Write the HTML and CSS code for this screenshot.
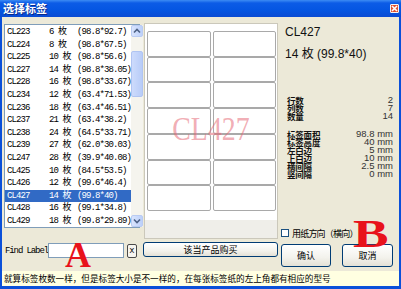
FILE: index.html
```html
<!DOCTYPE html>
<html>
<head>
<meta charset="utf-8">
<title>选择标签</title>
<link rel="stylesheet" href="styles.css">
</head>
<body>
<div class="window">
  <div class="titlebar">
    <span class="title">选择标签</span>
    <span class="close">
      <svg width="7" height="7" viewBox="0 0 7 7"><path d="M1 1L6 6M6 1L1 6" stroke="#fff" stroke-width="1.6"/></svg>
    </span>
  </div>
  <div class="frame">
    <div class="main">
      <div class="col left">
        <div class="list">
          <div class="rows">
            <div class="row"><span class="code">CL223</span><span class="count">6 枚</span><span>(98.8*92.7)</span></div>
            <div class="row"><span class="code">CL224</span><span class="count">8 枚</span><span>(98.8*67.5)</span></div>
            <div class="row"><span class="code">CL225</span><span class="count">10 枚</span><span>(98.8*56.6)</span></div>
            <div class="row"><span class="code">CL227</span><span class="count">14 枚</span><span>(98.8*38.05)</span></div>
            <div class="row"><span class="code">CL228</span><span class="count">16 枚</span><span>(98.8*33.67)</span></div>
            <div class="row"><span class="code">CL234</span><span class="count">12 枚</span><span>(63.4*71.53)</span></div>
            <div class="row"><span class="code">CL236</span><span class="count">18 枚</span><span>(63.4*46.51)</span></div>
            <div class="row"><span class="code">CL237</span><span class="count">21 枚</span><span>(63.4*38.2)</span></div>
            <div class="row"><span class="code">CL238</span><span class="count">24 枚</span><span>(64.5*33.71)</span></div>
            <div class="row"><span class="code">CL239</span><span class="count">27 枚</span><span>(62.0*30.03)</span></div>
            <div class="row"><span class="code">CL247</span><span class="count">28 枚</span><span>(39.9*40.08)</span></div>
            <div class="row"><span class="code">CL425</span><span class="count">10 枚</span><span>(84.5*53.5)</span></div>
            <div class="row"><span class="code">CL426</span><span class="count">12 枚</span><span>(99.6*46.4)</span></div>
            <div class="row selected"><span class="code">CL427</span><span class="count">14 枚</span><span>(99.8*40)</span></div>
            <div class="row"><span class="code">CL428</span><span class="count">16 枚</span><span>(99.1*34.8)</span></div>
            <div class="row"><span class="code">CL429</span><span class="count">18 枚</span><span>(99.8*29.89)</span></div>
          </div>
          <div class="scrollbar">
            <div class="sb-btn">
              <svg width="10" height="10" viewBox="0 0 10 10"><path d="M2 6.5L5 3.5L8 6.5" fill="none" stroke="#4d6185" stroke-width="1.6"/></svg>
            </div>
            <div class="track"><div class="thumb"></div></div>
            <div class="sb-btn">
              <svg width="10" height="10" viewBox="0 0 10 10"><path d="M2 3.5L5 6.5L8 3.5" fill="none" stroke="#4d6185" stroke-width="1.6"/></svg>
            </div>
          </div>
        </div>
        <div class="find">
          <span class="find-label">Find Label</span>
          <span class="find-input"></span>
          <span class="find-clear">X</span>
        </div>
      </div>

      <div class="col center">
        <div class="preview">
          <div class="sheet">
            <div class="labels">
              <div class="lbl"></div><div class="lbl"></div>
              <div class="lbl"></div><div class="lbl"></div>
              <div class="lbl"></div><div class="lbl"></div>
              <div class="lbl"></div><div class="lbl"></div>
              <div class="lbl"></div><div class="lbl"></div>
              <div class="lbl"></div><div class="lbl"></div>
              <div class="lbl"></div><div class="lbl"></div>
            </div>
          </div>
          <div class="watermark">CL427</div>
        </div>
        <div class="btn wide">该当产品购买</div>
      </div>

      <div class="col right">
        <div class="code-title">CL427</div>
        <div class="sub-title">14 枚 (99.8*40)</div>
        <div class="stats">
          <span class="k">行数</span><span class="v">2</span>
          <span class="k">列数</span><span class="v">7</span>
          <span class="k">数量</span><span class="v">14</span>
        </div>
        <div class="stats">
          <span class="k">标签面积</span><span class="v">98.8 mm</span>
          <span class="k">标签高度</span><span class="v">40 mm</span>
          <span class="k">左白边</span><span class="v">5 mm</span>
          <span class="k">上白边</span><span class="v">10 mm</span>
          <span class="k">横间隔</span><span class="v">2.5 mm</span>
          <span class="k">竖间隔</span><span class="v">0 mm</span>
        </div>
        <div class="orient"><span class="box"></span>用纸方向（横向）</div>
        <div class="actions">
          <div class="btn ok">确认</div>
          <div class="btn cancel">取消</div>
        </div>
      </div>
    </div>
    <div class="hint">就算标签枚数一样，但是标签大小是不一样的，在每张标签纸的左上角都有相应的型号</div>
  </div>
  <div class="mark mark-a">A</div>
  <div class="mark mark-b">B</div>
</div>
</body>
</html>
```

FILE: styles.css
```css
body {
    margin: 0;
    padding: 0;
    background: #fff;
}

.window {
    width: 401px;
    height: 289px;
    background: #0b50d9;
    display: flex;
    flex-direction: column;
    position: relative;
    overflow: hidden;
    font-family: "Noto Sans CJK SC", sans-serif;
}

/* title bar */

.titlebar {
    height: 17px;
    flex: none;
    display: flex;
    align-items: center;
    justify-content: space-between;
    padding: 0 2px 0 3px;
    background: linear-gradient(#3d8cf4 0, #0c5ce6 3px, #0556e2 10px, #0a4bd3 17px);
}

.title {
    color: #fff;
    font-size: 11px;
    font-weight: bold;
    line-height: 17px;
    text-shadow: 1px 1px 0 #0a2a8a;
}

.close {
    width: 9px;
    height: 9px;
    box-sizing: border-box;
    border: 1px solid #f4f4f4;
    border-radius: 1px;
    background: #e0512e;
    display: flex;
    align-items: center;
    justify-content: center;
}

.close svg {
    display: block;
}

.frame {
    flex: 1;
    margin: 0 2px 3px;
    background: #ece9d8;
    display: flex;
    flex-direction: column;
}

.main {
    height: 254px;
    display: flex;
    padding-left: 2px;
}

.col {
    display: flex;
    flex-direction: column;
}

.left {
    width: 136px;
}

.center {
    width: 134px;
    margin-left: 4px;
}

.right {
    width: 118px;
    margin-left: 3px;
    box-sizing: border-box;
    padding: 0 6px 0 4px;
}

/* list */

.list {
    margin-top: 7px;
    height: 204px;
    box-sizing: border-box;
    border: 1px solid #7f9db9;
    background: #fff;
    display: flex;
}

.rows {
    flex: 1;
    padding-top: 1px;
}

.row {
    height: 12.6px;
    line-height: 12.6px;
    padding-left: 2px;
    display: flex;
    font-family: "Liberation Mono", "Noto Sans CJK SC", monospace;
    font-size: 9px;
    letter-spacing: -0.9px;
    color: #000;
    white-space: nowrap;
}

.row .code {
    width: 42px;
}

.row .count {
    width: 28px;
}

.row.selected {
    background: #316ac5;
    color: #fff;
}

.scrollbar {
    width: 12px;
    display: flex;
    flex-direction: column;
    background: #f5f4ee;
}

.sb-btn {
    height: 12px;
    box-sizing: border-box;
    border: 1px solid #b9cbf3;
    border-radius: 2px;
    background: linear-gradient(90deg, #d9e4fd, #bcd0fa);
    display: flex;
    align-items: center;
    justify-content: center;
}

.track {
    flex: 1;
    padding-top: 14px;
}

.thumb {
    height: 46px;
    box-sizing: border-box;
    border: 1px solid #b0c4f2;
    border-radius: 2px;
    background: linear-gradient(90deg, #cddbfc, #b8ccf8);
}

.find {
    margin-top: 15px;
    height: 15px;
    display: flex;
    align-items: center;
}

.find-label {
    width: 43px;
    padding-left: 1px;
    font-family: "Liberation Mono", monospace;
    font-size: 9px;
    letter-spacing: -1.1px;
    white-space: nowrap;
}

.find-input {
    width: 76px;
    height: 15px;
    box-sizing: border-box;
    border: 1px solid #7f9db9;
    background: #fff;
}

.find-clear {
    margin-left: 3px;
    width: 10px;
    height: 14px;
    box-sizing: border-box;
    border: 1px solid #4a4a4a;
    border-radius: 2px;
    background: #f6f5f0;
    font-family: "Liberation Mono", monospace;
    font-size: 8px;
    line-height: 12px;
    text-align: center;
}

/* preview */

.preview {
    margin-top: 6px;
    height: 216px;
    box-sizing: border-box;
    border: 1px solid #cbc8bb;
    background: #efeee9;
    position: relative;
}

.sheet {
    background: #fff;
    padding: 7px 1px 9px 2px;
}

.labels {
    height: 180px;
    display: grid;
    grid-template-columns: 1fr 1fr;
    grid-template-rows: repeat(7, 1fr);
    column-gap: 2px;
}

.lbl {
    border: 1px solid #a9a9a9;
    border-radius: 2px;
    background: #fff;
}

.watermark {
    position: absolute;
    top: 88px;
    left: 0;
    right: 0;
    text-align: center;
    font-family: "Liberation Serif", serif;
    font-size: 34px;
    line-height: 34px;
    color: rgba(230, 105, 118, 0.55);
    transform: scaleX(0.82);
}

/* buttons */

.btn {
    box-sizing: border-box;
    border: 1px solid #003c74;
    border-radius: 3px;
    background: linear-gradient(#ffffff, #f3f2ec 60%, #e4e1d6);
    display: flex;
    align-items: center;
    justify-content: center;
    font-size: 9px;
    color: #000;
}

.wide {
    margin-top: 3px;
    margin-left: -1px;
    height: 15px;
}

/* right info */

.code-title {
    margin-top: 8px;
    font-family: "Liberation Sans", sans-serif;
    font-size: 12px;
    line-height: 14px;
    color: #111;
}

.sub-title {
    margin-top: 8px;
    font-family: "Liberation Sans", "Noto Sans CJK SC", sans-serif;
    font-size: 12px;
    line-height: 14px;
    color: #111;
}

.stats {
    margin-top: 35px;
    padding-left: 2px;
    display: grid;
    grid-template-columns: 1fr auto;
    grid-auto-rows: 8px;
    line-height: 8px;
}

.stats + .stats {
    margin-top: 10px;
}

.stats .k {
    font-size: 8.5px;
    font-weight: bold;
    letter-spacing: -0.2px;
    white-space: nowrap;
    color: #111;
}

.stats .v {
    text-align: right;
    font-family: "Liberation Sans", sans-serif;
    font-size: 9.5px;
    color: #333;
}

.orient {
    margin-top: 50px;
    margin-left: -4px;
    height: 10px;
    display: flex;
    align-items: center;
    font-size: 9px;
    letter-spacing: -0.8px;
    white-space: nowrap;
}

.orient .box {
    width: 8px;
    height: 8px;
    box-sizing: border-box;
    border: 1px solid #1c5180;
    background: #fff;
    margin-right: 3px;
}

.actions {
    margin-top: 6px;
    margin-left: -4px;
    display: flex;
    gap: 11px;
}

.actions .btn {
    height: 23px;
}

.ok {
    width: 52px;
}

.cancel {
    width: 53px;
}

/* hint line */

.hint {
    height: 15px;
    line-height: 15px;
    padding-left: 2px;
    background: #ffffe1;
    font-size: 8.6px;
    white-space: nowrap;
    overflow: hidden;
}

/* red annotation letters */

.mark {
    position: absolute;
    font-family: "Liberation Serif", serif;
    font-weight: bold;
    color: #e8121b;
}

.mark-a {
    left: 65px;
    top: 241px;
    font-size: 36px;
    line-height: 28px;
}

.mark-b {
    left: 353px;
    top: 218px;
    font-size: 41px;
    line-height: 30px;
    transform: scaleX(1.3);
    transform-origin: left;
}
```
